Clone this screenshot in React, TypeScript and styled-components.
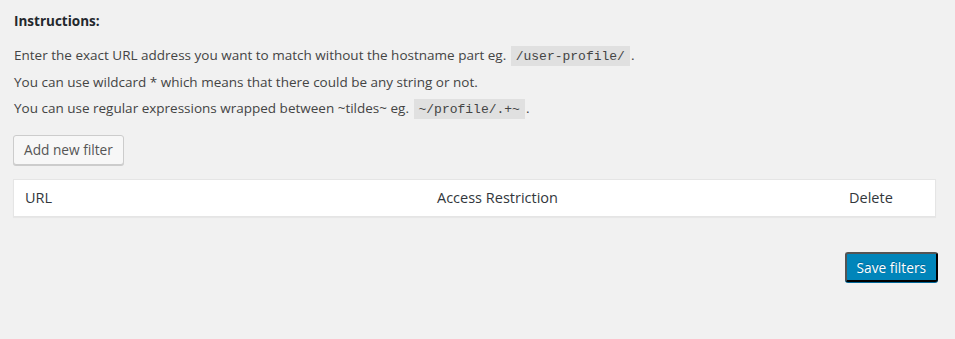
import React from "react";
import styled, { createGlobalStyle } from "styled-components";

const GlobalStyle = createGlobalStyle`
  html, body {
    margin: 0;
    padding: 0;
    background: #f1f1f1;
  }
  body {
    font-family: "Open Sans", "Noto Sans", sans-serif;
    font-size: 13.5px;
    color: #444;
  }
`;

const Page = styled.div`
  padding: 12px 17px 40px 13px;
`;

const Heading = styled.h4`
  margin: 0 0 15px 1px;
  font-size: 13.5px;
  line-height: 19px;
  font-weight: 700;
  color: #23282d;
`;

const Line = styled.p`
  margin: 0 0 6.5px 1px;
  line-height: 19.5px;
`;

const Code = styled.code`
  font-family: "Liberation Mono", "DejaVu Sans Mono", monospace;
  font-size: 13px;
  background: rgba(0, 0, 0, 0.07);
  padding: 3px 5px 2px;
  margin: 0 1px;
`;

const Button = styled.button<{ $primary?: boolean }>`
  font-family: inherit;
  font-size: 13.7px;
  height: 30px;
  line-height: 28px;
  padding: 0 10px 1px;
  border-radius: 3px;
  border: 1px solid ${(p) => (p.$primary ? "#0073aa #006799 #006799" : "#ccc")};
  background: ${(p) => (p.$primary ? "#0085ba" : "#f7f7f7")};
  color: ${(p) => (p.$primary ? "#fff" : "#555")};
  box-shadow: 0 1px 0 ${(p) => (p.$primary ? "#006799" : "#ccc")};
  text-shadow: ${(p) => (p.$primary ? "0 -1px 1px #006799" : "none")};
  cursor: pointer;
  white-space: nowrap;
`;

const Toolbar = styled.div`
  margin-top: 15px;
`;

const Table = styled.table`
  width: calc(100% - 2px);
  table-layout: fixed;
  margin-top: 14px;
  border-spacing: 0;
  background: #fff;
  border: 1px solid #e5e5e5;
  box-shadow: 0 1px 1px rgba(0, 0, 0, 0.04);
`;

const Col = styled.col<{ $width?: string }>`
  width: ${(p) => p.$width || "auto"};
`;

const Th = styled.th`
  text-align: left;
  font-weight: 400;
  font-size: 14.5px;
  line-height: 20px;
  padding: 8px 10px 8px 11px;
  color: #32373c;
`;

const Footer = styled.div`
  display: flex;
  justify-content: flex-end;
  margin-top: 35px;
`;

export default function App() {
  return (
    <Page>
      <GlobalStyle />
      <Heading>Instructions:</Heading>
      <Line>
        Enter the exact URL address you want to match without the hostname part eg. <Code>/user-profile/</Code>.
      </Line>
      <Line>You can use wildcard * which means that there could be any string or not.</Line>
      <Line>
        You can use regular expressions wrapped between ~tildes~ eg. <Code>~/profile/.+~</Code>.
      </Line>
      <Toolbar>
        <Button type="button">Add new filter</Button>
      </Toolbar>
      <Table>
        <colgroup>
          <Col $width="412px" />
          <Col $width="412px" />
          <Col />
        </colgroup>
        <thead>
          <tr>
            <Th>URL</Th>
            <Th>Access Restriction</Th>
            <Th>Delete</Th>
          </tr>
        </thead>
      </Table>
      <Footer>
        <Button type="button" $primary>
          Save filters
        </Button>
      </Footer>
    </Page>
  );
}
